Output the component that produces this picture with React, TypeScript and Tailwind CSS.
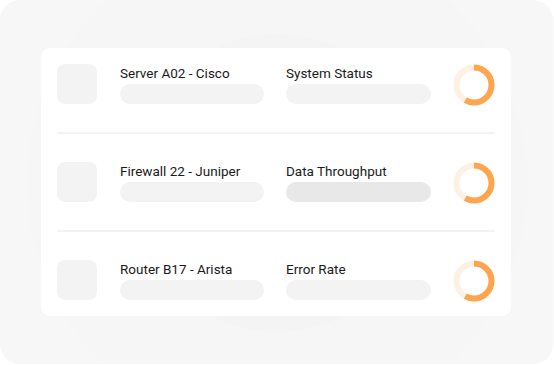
const rows = [
  { device: "Server A02 - Cisco", metric: "System Status", dark: false },
  { device: "Firewall 22 - Juniper", metric: "Data Throughput", dark: true },
  { device: "Router B17 - Arista", metric: "Error Rate", dark: false },
];

function Ring({ value }: { value: number }) {
  const r = 17.5;
  const c = 2 * Math.PI * r;
  return (
    <svg width="42" height="42" viewBox="0 0 42 42" className="shrink-0">
      <circle cx="21" cy="21" r={r} fill="none" stroke="#fdf1e5" strokeWidth="6" />
      <circle
        cx="21"
        cy="21"
        r={r}
        fill="none"
        stroke="#ffa54f"
        strokeWidth="6"
        strokeDasharray={`${c * value} ${c}`}
        transform="rotate(-90 21 21)"
      />
    </svg>
  );
}

export default function App() {
  return (
    <div className="w-[554px] h-[365px] bg-white font-['Roboto',sans-serif]">
      <div className="w-[553px] h-[364px] rounded-[20px] bg-[#f7f7f7] bg-[radial-gradient(circle_at_277px_183px,#f4f4f4_0,#f4f4f4_148px,#f6f6f6_149px,#f6f6f6_250px,#f7f7f7_251px)] pt-[48px] pl-[41px]">
        <div className="w-[470px] rounded-[9px] bg-white px-4 py-4">
          {rows.map((row, i) => (
            <div key={row.device}>
              {i > 0 && <div className="h-[2px] bg-[#f3f3f3] my-[28px]" />}
              <div className="flex items-center h-10">
                <div className="w-10 h-10 rounded-[8px] bg-[#f3f3f3] shrink-0" />
                <div className="ml-[23px] w-[144px]">
                  <p className="text-[13.5px] leading-[18px] text-[#1a1a1a]">
                    {row.device}
                  </p>
                  <div className="mt-[2px] h-5 rounded-full bg-[#f3f3f3]" />
                </div>
                <div className="ml-[22px] w-[145px]">
                  <p className="text-[13.5px] leading-[18px] text-[#1a1a1a]">
                    {row.metric}
                  </p>
                  <div
                    className={
                      row.dark
                        ? "mt-[2px] h-5 rounded-full bg-[#e8e8e8]"
                        : "mt-[2px] h-5 rounded-full bg-[#f3f3f3]"
                    }
                  />
                </div>
                <div className="ml-auto mt-[2px]">
                  <Ring value={0.58} />
                </div>
              </div>
            </div>
          ))}
        </div>
      </div>
    </div>
  );
}
